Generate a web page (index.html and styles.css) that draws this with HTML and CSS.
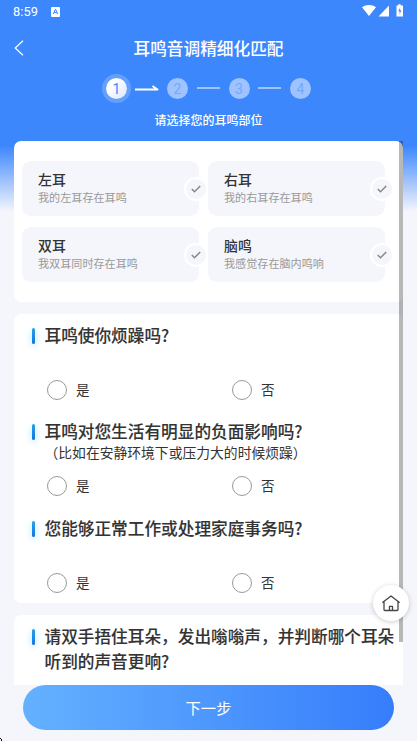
FILE: index.html
```html
<!DOCTYPE html>
<html lang="zh-CN">
<head>
<meta charset="utf-8">
<title>耳鸣音调精细化匹配</title>
<link rel="stylesheet" href="styles.css">
</head>
<body>
<div class="app">
  <div class="status">
    <span class="time">8:59</span>
    <svg class="ime" width="9" height="10" viewBox="0 0 9 10"><rect width="9" height="10" rx="1" fill="#fff"/><path d="M2.4 7 4.3 2.4h.4L6.6 7M3.1 5.6h2.8" stroke="#3d87fd" stroke-width="1" fill="none"/></svg>
    <svg class="signals" width="42" height="14" viewBox="0 0 42 14"><path d="M0 3.2C4 .1 10 .1 14 3.2L7 12Z" fill="#fff"/><path d="M27 1.5V12.500H16.500Z" fill="#fff"/><path d="M36.300 1.500V.3h2.400v1.200H41V12.500H34.500V1.500Z" fill="#fff"/><path d="M38.200 3.500 36.300 7.300h1.300v3.200l1.700-4.200h-1.200Z" fill="#3d87fd"/></svg>
  </div>
  <div class="nav">
    <svg class="back" width="10" height="16" viewBox="0 0 10 16"><path d="M9 .8 1.200 8 9 15.200" fill="none" stroke="#fff" stroke-width="1.200"/></svg>
    <h1>耳鸣音调精细化匹配</h1>
  </div>
  <div class="steps">
    <span class="step current">1</span>
    <svg width="24" height="8" viewBox="0 0 24 8"><path d="M0 5.500H22.500L17.500 2" fill="none" stroke="#fff" stroke-width="2" stroke-linejoin="round"/></svg>
    <span class="step">2</span><i class="link"></i>
    <span class="step">3</span><i class="link"></i>
    <span class="step">4</span>
  </div>
  <p class="hint">请选择您的耳鸣部位</p>

  <div class="viewport">
    <section class="card options">
      <div class="option"><b>左耳</b><small>我的左耳存在耳鸣</small><span class="check"><svg width="10" height="8" viewBox="0 0 10 8"><path d="M.8 4 3.500 6.700 9.200 1" /></svg></span></div>
      <div class="option"><b>右耳</b><small>我的右耳存在耳鸣</small><span class="check"><svg width="10" height="8" viewBox="0 0 10 8"><path d="M.8 4 3.500 6.700 9.200 1" /></svg></span></div>
      <div class="option"><b>双耳</b><small>我双耳同时存在耳鸣</small><span class="check"><svg width="10" height="8" viewBox="0 0 10 8"><path d="M.8 4 3.500 6.700 9.200 1" /></svg></span></div>
      <div class="option"><b>脑鸣</b><small>我感觉存在脑内鸣响</small><span class="check"><svg width="10" height="8" viewBox="0 0 10 8"><path d="M.8 4 3.500 6.700 9.200 1" /></svg></span></div>
    </section>
    <section class="card questions">
      <div class="question">
        <h2>耳鸣使你烦躁吗?</h2><p class="note"></p>
        <div class="answers"><label><i></i>是</label><label><i></i>否</label></div>
      </div>
      <div class="question">
        <h2>耳鸣对您生活有明显的负面影响吗?</h2><p class="note">（比如在安静环境下或压力大的时候烦躁）</p>
        <div class="answers"><label><i></i>是</label><label><i></i>否</label></div>
      </div>
      <div class="question">
        <h2>您能够正常工作或处理家庭事务吗?</h2><p class="note"></p>
        <div class="answers"><label><i></i>是</label><label><i></i>否</label></div>
      </div>
    </section>
    <section class="card last">
      <h2>请双手捂住耳朵，发出嗡嗡声，并判断哪个耳朵听到的声音更响?</h2>
    </section>
    <div class="scrollbar"></div>
  </div>
  <div class="next">下一步</div>
  <div class="home"><svg width="18" height="17" viewBox="0 0 18 17"><path d="M.8 7.300 9 1l8.200 6.300M2 6.500V14.500q0 1 1 1H15q1 0 1-1V6.500M7.500 15.500V11.300h3v4.200" fill="none" stroke="#454545" stroke-width="1.300" stroke-linejoin="round" stroke-linecap="round"/></svg></div>
  <svg class="corner" width="3" height="4" viewBox="0 0 3 4"><path d="M0 1h1v1H0zM1 2h1v1H1zM1 3h1v1H1z" fill="#111"/></svg>
</div>
</body>
</html>
```
FILE: styles.css
```css
* { box-sizing: border-box; }
body {
  margin: 0;
  font-family: "Noto Sans CJK SC", sans-serif;
  color: #333;
}
.app {
  position: relative;
  height: 741px;
  overflow: hidden;
  display: flex;
  flex-direction: column;
  background: linear-gradient(#3d87fd 0, #3d87fd 146px, #f5f6fb 212px);
}
.status {
  height: 24px;
  flex: none;
  display: flex;
  align-items: center;
  padding: 0 13px;
  color: #fff;
}
.time { font-family: Roboto, sans-serif; font-size: 12.8px; line-height: 24px; letter-spacing: 0.1px; }
.ime { margin: -1px 0 0 13px; }
.signals { margin: -2px 0 0 auto; }
.nav {
  height: 48px;
  flex: none;
  display: grid;
  grid-template-columns: 10px 1fr 10px;
  align-items: center;
  padding: 0 14px;
}
.nav h1 {
  margin: 0;
  font-size: 16.67px;
  line-height: 24px;
  font-weight: 500;
  color: #fff;
  text-align: center;
}
.steps {
  height: 32px;
  flex: none;
  display: flex;
  align-items: center;
  padding-left: 106px;
}
.steps svg { margin: 0 8px 0 8px; }
.step {
  width: 21px;
  height: 21px;
  border-radius: 50%;
  background: #9ec3fe;
  color: #76a8fb;
  font-family: Roboto, sans-serif;
  font-size: 14px;
  line-height: 22px;
  text-align: center;
}
.step.current {
  background: linear-gradient(135deg, #fff 30%, #d9e7ff);
  color: #3d87fd;
  box-shadow: 0 0 0 4px #659ffd;
}
.link { width: 23px; height: 2px; margin: 0 9px 0 8.5px; background: #9ec3fe; }
.hint {
  height: 37px;
  flex: none;
  margin: 0;
  padding-top: 6px;
  text-align: center;
  color: #fff;
  font-size: 12px;
  font-weight: 500;
  line-height: 20px;
}
.viewport {
  position: relative;
  height: 544px;
  flex: none;
  width: 389px;
  margin-left: 14px;
  overflow: hidden;
  display: flex;
  flex-direction: column;
  gap: 12px;
}
.card { flex: none; background: #fff; border-radius: 7px; }
.options {
  height: 161px;
  padding: 20px 17px 20px 8px;
  display: grid;
  grid-template-columns: 177px 177px;
  grid-auto-rows: 55px;
  gap: 11px 9px;
}
.option {
  position: relative;
  padding: 8px 16px;
  background: #f5f6fb;
  border-radius: 9px;
}
.option b { display: block; font-size: 13.9px; line-height: 20px; font-weight: 500; }
.option small { display: block; font-size: 11.1px; line-height: 17px; color: #999; }
.check {
  position: absolute;
  right: -8.5px;
  top: 16px;
  width: 24px;
  height: 24px;
  border: 2.5px solid #fff;
  border-radius: 50%;
  background: #f5f6fb;
  display: grid;
  place-items: center;
}
.check path { fill: none; stroke: #888; stroke-width: 1.5; }
.questions { height: 289px; padding: 9px 0 0 18px; }
.question { height: 96.300px; }
h2 {
  position: relative;
  margin: 0;
  padding-left: 12.500px;
  font-size: 16.67px;
  line-height: 25px;
  font-weight: 500;
  -webkit-text-stroke: 0.1px;
}
h2::before {
  content: "";
  position: absolute;
  left: 0;
  top: 5px;
  width: 3px;
  height: 16px;
  border-radius: 1.500px;
  background: linear-gradient(#29a0e8, #1674dc);
  box-shadow: 0 2px 7px #9bdcff;
}
.note { height: 18px; margin: 0; padding-left: 12.500px; font-size: 13.8px; line-height: 17px; }
.answers { display: grid; grid-template-columns: 185px 1fr; padding: 12px 0 0 15px; }
.answers label { display: flex; align-items: center; font-size: 13.5px; line-height: 20px; }
.answers i {
  width: 20px;
  height: 20px;
  margin: 2px 9px 0 0;
  border: 1.500px solid #999;
  border-radius: 50%;
}
.last { height: 90px; padding: 9px 0 0 18px; }
.scrollbar {
  position: absolute;
  right: 0;
  top: 0;
  width: 4px;
  height: 501px;
  background: rgba(0, 0, 0, 0.28);
}
.next {
  flex: none;
  width: 371px;
  height: 45px;
  margin-left: 23px;
  border-radius: 23px;
  background: linear-gradient(90deg, #64b1ff, #367dfb);
  color: #fff;
  text-align: center;
  font-size: 15.300px;
  line-height: 44px;
}
.home {
  position: absolute;
  left: 373px;
  top: 585px;
  width: 36px;
  height: 36px;
  border-radius: 50%;
  background: #fff;
  box-shadow: 0 1px 5px rgba(0, 0, 0, 0.2);
  display: grid;
  place-items: center;
}
.corner { position: absolute; left: 0; bottom: 0; }
```
